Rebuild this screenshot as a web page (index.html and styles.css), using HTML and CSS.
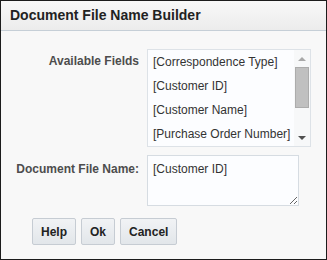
FILE: index.html
```html
<!DOCTYPE html>
<html lang="en">
<head>
    <meta charset="UTF-8">
    <meta name="viewport" content="width=device-width, initial-scale=1.0">
    <link rel="stylesheet" href="styles.css">
</head>
<body>
    <div class="dialog">
        <div class="dialog-title">Document File Name Builder</div>
        <div class="dialog-body">
            <div class="form-grid">
                <label class="field-label first">Available Fields</label>
                <div class="listbox">
                    <ul class="list-items">
                        <li>[Correspondence Type]</li>
                        <li>[Customer ID]</li>
                        <li>[Customer Name]</li>
                        <li>[Purchase Order Number]</li>
                    </ul>
                    <div class="scrollbar">
                        <span class="scroll-btn"><i class="arrow-up"></i></span>
                        <div class="scroll-track"><div class="scroll-thumb"></div></div>
                        <span class="scroll-btn"><i class="arrow-down"></i></span>
                    </div>
                </div>
                <label class="field-label second" for="file-name">Document File Name:</label>
                <textarea id="file-name" class="file-name">[Customer ID]</textarea>
            </div>
            <div class="button-row">
                <button>Help</button>
                <button>Ok</button>
                <button>Cancel</button>
            </div>
        </div>
    </div>
</body>
</html>
```

FILE: styles.css
```css
* {
    box-sizing: border-box;
}

body {
    margin: 0;
    font-family: "Liberation Sans", Arial, sans-serif;
    font-size: 12px;
}

.dialog {
    width: 327px;
    height: 260px;
    border: 1px solid #1c1c1c;
    background: #f8f8f8;
}

.dialog-title {
    height: 30px;
    line-height: 29px;
    padding-left: 9px;
    font-size: 14px;
    font-weight: bold;
    color: #222;
    background: linear-gradient(#f8f8f8, #ececec);
    border-bottom: 1px solid #c6cfd7;
}

.dialog-body {
    padding: 18px 8px 0;
}

.form-grid {
    display: grid;
    grid-template-columns: 130px 164px;
    column-gap: 8px;
    row-gap: 8px;
}

.field-label {
    text-align: right;
    font-weight: bold;
    color: #4d4d4d;
    line-height: 14px;
}

.field-label.first {
    padding-top: 5px;
}

.field-label.second {
    padding-top: 7px;
}

.listbox {
    display: flex;
    height: 98px;
    border: 1px solid #dde2e7;
    background: #fcfdff;
}

.list-items {
    flex: 1;
    margin: 0;
    padding: 0 0 0 5px;
    list-style: none;
    color: #333;
    line-height: 24px;
    white-space: nowrap;
}

.scrollbar {
    width: 16px;
    display: flex;
    flex-direction: column;
    background: #f7f8f9;
}

.scroll-btn {
    height: 17px;
    display: flex;
    align-items: center;
    justify-content: center;
}

.arrow-up {
    border-left: 4px solid transparent;
    border-right: 4px solid transparent;
    border-bottom: 4px solid #a8a8a8;
}

.arrow-down {
    border-left: 4px solid transparent;
    border-right: 4px solid transparent;
    border-top: 4px solid #505050;
}

.scroll-track {
    flex: 1;
    padding: 0 1px;
}

.scroll-thumb {
    height: 41px;
    background: #c0c0c0;
    border: 1px solid #acacac;
}

.file-name {
    width: 152px;
    height: 51px;
    margin: 0;
    padding: 6px 5px;
    border: 1px solid #d6dce2;
    background: #fcfdff;
    color: #333;
    font-family: "Liberation Sans", Arial, sans-serif;
    font-size: 12px;
    line-height: 14px;
    resize: both;
}

.button-row {
    display: flex;
    gap: 5px;
    margin: 12px 0 0 23px;
}

.button-row button {
    height: 27px;
    padding: 0 8px;
    border: 1px solid #c6ccd3;
    border-radius: 2px;
    background: linear-gradient(#f1f3f5, #e2e6ea);
    font-family: "Liberation Sans", Arial, sans-serif;
    font-size: 12px;
    font-weight: bold;
    color: #222;
}
```
